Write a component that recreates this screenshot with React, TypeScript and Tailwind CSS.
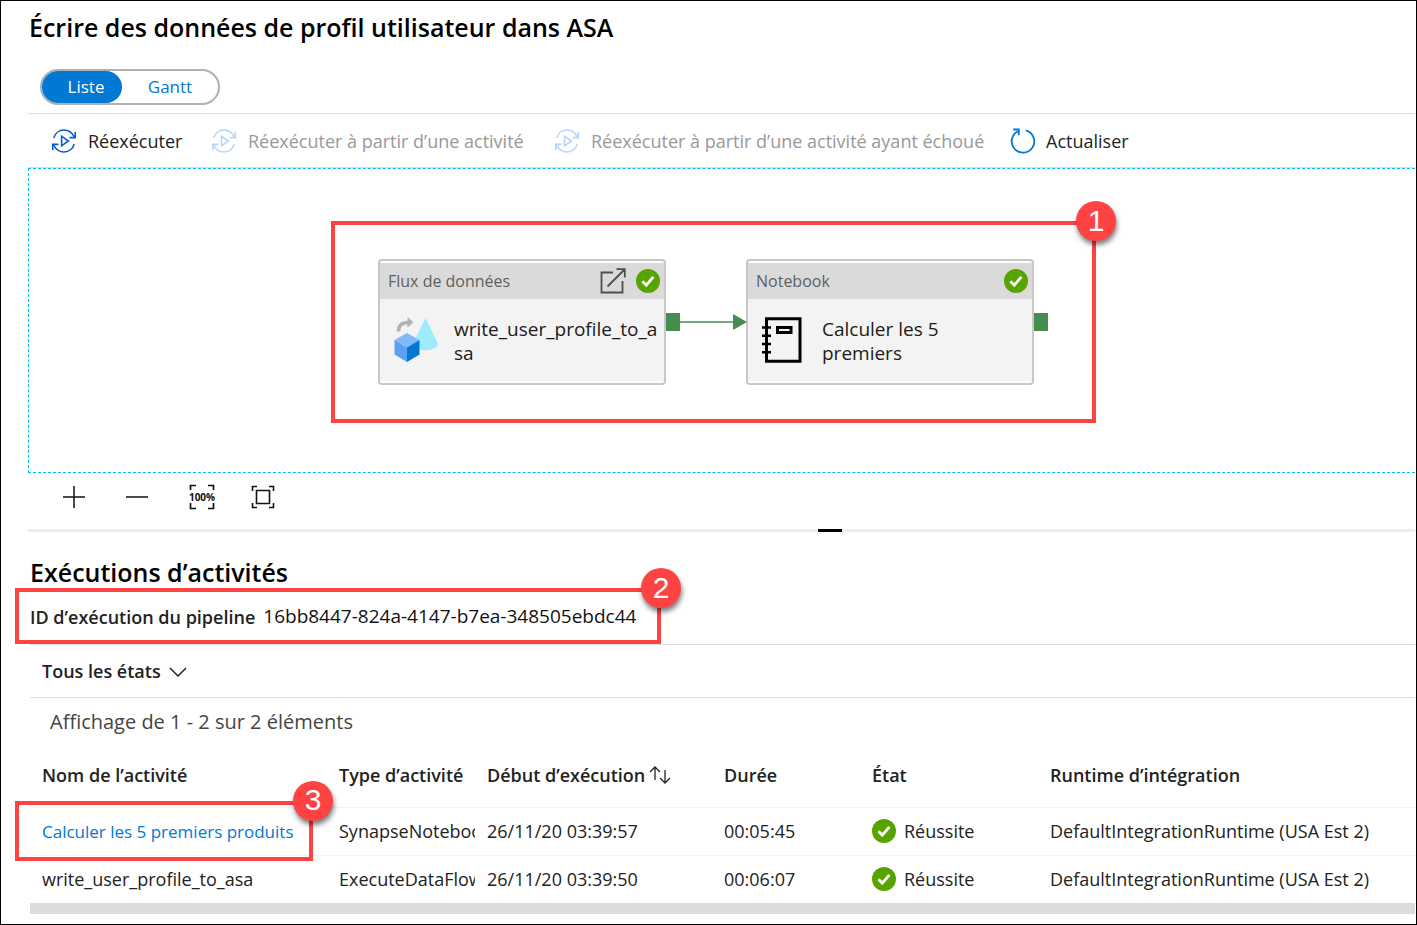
import React, { useState } from 'react';

interface ActivityRun {
    name: string;
    type: string;
    start: string;
    duration: string;
    status: string;
    runtime: string;
    isLink?: boolean;
}

const runs: ActivityRun[] = [
    { name: 'Calculer les 5 premiers produits', type: 'SynapseNotebook', start: '26/11/20 03:39:57', duration: '00:05:45', status: 'Réussite', runtime: 'DefaultIntegrationRuntime (USA Est 2)', isLink: true },
    { name: 'write_user_profile_to_asa', type: 'ExecuteDataFlow', start: '26/11/20 03:39:50', duration: '00:06:07', status: 'Réussite', runtime: 'DefaultIntegrationRuntime (USA Est 2)' },
];

function RerunIcon({ className }: { className: string }) {
    return (
        <svg viewBox="0 0 24 24" className={`w-6 h-6 shrink-0 ${className}`} fill="none" stroke="currentColor" strokeWidth="1.6">
            <path d="M1.800 9C3 4.400 7 1 12 1c4.400 0 8 2.400 10.400 7" />
            <path d="M23.200 3v5.600h-5.600" />
            <path d="M22.200 15c-1.200 4.600-5.200 8-10.200 8-4.400 0-8-2.400-10.400-7" />
            <path d="M.8 21v-5.600h5.600" />
            <path d="M9.600 7.200v9.600l6.800-4.800z" />
        </svg>
    );
}

function RefreshIcon() {
    return (
        <svg viewBox="0 0 26 26" className="w-[26px] h-[26px] shrink-0 text-[#0078d4]" fill="none" stroke="currentColor" strokeWidth="1.800">
            <path d="M15.800 2.400A11.300 11.300 0 1 1 8 3.200" />
            <path d="M3.200 1.500h5.600v5.800" />
        </svg>
    );
}

function SuccessIcon() {
    return (
        <svg viewBox="0 0 24 24" className="w-6 h-6 shrink-0" role="img" aria-label="Réussite">
            <circle cx="12" cy="12" r="12" fill="#57a300" />
            <path d="M6.400 12.200l3.900 4 7.100-8.400" fill="none" stroke="#fff" strokeWidth="2.800" />
        </svg>
    );
}

function OpenIcon() {
    return (
        <svg viewBox="0 0 26 26" className="w-[26px] h-[26px]" fill="none" stroke="#4d4d4d" strokeWidth="1.800">
            <path d="M13 4.500H1.500v20h21V13" />
            <path d="M7.500 18.500L24.500 1.500M16.500 1.200h8.300v8.300" />
        </svg>
    );
}

function DataFlowIcon() {
    return (
        <svg viewBox="0 0 44 46" className="w-11 h-[46px] shrink-0">
            <path d="M31.500 1L44 26.500c0 9-25 9-25 0z" fill="#9cebff" />
            <path d="M4.500 14.500C4.500 8.500 8 5.500 14 5.500" fill="none" stroke="#b3b3b3" strokeWidth="3.400" />
            <path d="M13.500 0l6 5.300-6 5.300z" fill="#b3b3b3" />
            <path d="M13 16l12.500 7L13 30.500.5 23z" fill="#83b9f9" />
            <path d="M.5 23L13 30.500v14.500L.5 37.500z" fill="#5ea0ef" />
            <path d="M25.500 23L13 30.500v14.500l12.500-7.500z" fill="#0078d4" />
        </svg>
    );
}

function NotebookIcon() {
    return (
        <svg viewBox="0 0 40 46" className="w-10 h-[46px] shrink-0" fill="none" stroke="#000" strokeWidth="3">
            <path d="M4.500 1.700h33.500v42.600H4.500z" />
            <path d="M15.500 10.500h13.500v5h-13.500z" />
            <path d="M0 10.500h9M0 18.700h9M0 27h9M0 35.300h9" strokeWidth="2.600" />
        </svg>
    );
}

// Numbered red frame drawn over the part of the page it surrounds
function Callout({ step, className }: { step: number; className: string }) {
    return (
        <div className={`absolute z-10 border-4 border-[#ff4343] pointer-events-none ${className}`}>
            <span className="absolute -top-6 -right-6 flex items-center justify-center w-10 h-10 rounded-full bg-[#ff4343] text-white text-[30px] font-normal shadow-[1px_4px_5px_rgba(0,0,0,0.5)] font-['Liberation_Sans',sans-serif]">
                {step}
            </span>
        </div>
    );
}

interface ActivityNodeProps {
    kind: string;
    title: string;
    icon: React.ReactNode;
    canOpen?: boolean;
    className: string;
}

function ActivityNode({ kind, title, icon, canOpen, className }: ActivityNodeProps) {
    return (
        <div className={`absolute w-[288px] h-[126px] py-0.5 flex flex-col bg-white border-2 border-[#c8c8c8] rounded ${className}`}>
            <div className="flex items-center h-9 pl-2 pr-1 bg-[#dadada] text-base text-[#5f5f5f]">
                <span className="flex-1">{kind}</span>
                {canOpen && (
                    <button aria-label="Ouvrir" className="mr-2.5">
                        <OpenIcon />
                    </button>
                )}
                <SuccessIcon />
            </div>
            <div className="flex flex-1 gap-4 pl-3.5 bg-[#f3f3f3]">
                <span className="w-11 pt-[18px]">{icon}</span>
                <span className="flex-1 pt-[18px] text-[19px] leading-6 text-[#1b1b1b] wrap-anywhere whitespace-pre-line">{title}</span>
            </div>
        </div>
    );
}

export default function App() {
    const [view, setView] = useState<'list' | 'gantt'>('list');

    const tab = (active: boolean) =>
        active ? 'bg-[#0078d4] text-white w-20 pl-2' : 'text-[#0078d4] w-24';

    return (
        <div className="min-h-screen border border-black bg-white text-lg text-[#222] font-['Open_Sans','Noto_Sans',sans-serif]">
            <h1 className="pl-7 pt-2 text-[25px] leading-9 font-semibold text-black">Écrire des données de profil utilisateur dans ASA</h1>

            <div className="mt-6 ml-[39px] inline-flex h-9 rounded-full border-2 border-[#b0b0b0] text-[17px]">
                <button onClick={() => setView('list')} className={`rounded-full ${tab(view === 'list')}`}>Liste</button>
                <button onClick={() => setView('gantt')} className={`rounded-full ${tab(view === 'gantt')}`}>Gantt</button>
            </div>

            <div className="ml-[27px] mr-px">
                <div className="flex items-center h-[55px] mt-2 pl-6 border-y border-[#dedede] whitespace-nowrap">
                    <button className="flex items-center gap-3 w-[160px]">
                        <RerunIcon className="text-[#015cda]" />
                        Réexécuter
                    </button>
                    <button disabled className="flex items-center gap-3 w-[343px] text-[#999]">
                        <RerunIcon className="text-[#b9d3f7]" />
                        Réexécuter à partir d’une activité
                    </button>
                    <button disabled className="flex items-center gap-3 w-[455px] text-[#999]">
                        <RerunIcon className="text-[#b9d3f7]" />
                        Réexécuter à partir d’une activité ayant échoué
                    </button>
                    <button className="flex items-center gap-2.5">
                        <RefreshIcon />
                        Actualiser
                    </button>
                </div>

                <div className="relative h-[305px] overflow-hidden border border-r-0 border-dashed border-[#00bcf2]">
                    <ActivityNode
                        kind="Flux de données"
                        title="write_user_profile_to_asa"
                        icon={<DataFlowIcon />}
                        canOpen
                        className="left-[349px] top-[90px]"
                    />
                    <ActivityNode
                        kind="Notebook"
                        title={'Calculer les 5\npremiers'}
                        icon={<NotebookIcon />}
                        className="left-[717px] top-[90px]"
                    />
                    <svg viewBox="0 0 82 20" className="absolute left-[637px] top-[143px] w-[82px] h-5" fill="#458e50">
                        <path d="M0 1h14v18H0zM67 2l14 8-14 8z" />
                        <path d="M14 10h54" stroke="#458e50" strokeWidth="1.500" />
                    </svg>
                    <div className="absolute left-[1005px] top-[144px] w-3.5 h-[18px] bg-[#458e50]" />
                    <Callout step={1} className="left-[302px] top-[52px] w-[765px] h-[202px]" />
                </div>

                <div className="flex items-center h-14 pb-2 pl-[35px] gap-10">
                    <button aria-label="Zoom avant">
                        <svg viewBox="0 0 22 22" className="w-[22px] h-[22px]" stroke="#111" strokeWidth="1.500">
                            <path d="M11 0v22M0 11h22" />
                        </svg>
                    </button>
                    <button aria-label="Zoom arrière">
                        <svg viewBox="0 0 24 22" className="w-6 h-[22px]" stroke="#111" strokeWidth="1.500">
                            <path d="M1 11h22" />
                        </svg>
                    </button>
                    <button aria-label="Zoom à 100 %">
                        <svg viewBox="0 0 26 26" className="w-[26px] h-[26px]">
                            <path d="M1.500 6V1.500H7M19 1.500h5.500V6M24.500 19v5.500H19M7 24.500H1.500V19" fill="none" stroke="#111" strokeWidth="1.700" />
                            <text x="13" y="16.500" textAnchor="middle" fontSize="10" fontWeight="700" fill="#111">100%</text>
                        </svg>
                    </button>
                    <button aria-label="Ajuster à la fenêtre" className="-ml-1">
                        <svg viewBox="0 0 24 24" className="w-6 h-6" fill="none" stroke="#111" strokeWidth="1.600">
                            <path d="M1.500 6V1.500H6M18 1.500h4.500V6M22.500 18v4.500H18M6 22.500H1.500V18M5.500 5.500h13v13h-13z" />
                        </svg>
                    </button>
                </div>

                <div className="flex justify-center h-[3px] pl-[216px] bg-[#ededed]">
                    <span className="w-6 bg-black" />
                </div>
            </div>

            <section className="ml-[29px] mr-px">
                <h2 className="pt-[22px] text-[25px] leading-9 font-semibold text-black">Exécutions d’activités</h2>

                <div className="relative flex items-center gap-2 h-[55px] border-b border-[#dcdcdc]">
                    <span className="font-semibold">ID d’exécution du pipeline</span>
                    <span className="text-[19px] text-[#111]">16bb8447-824a-4147-b7ea-348505ebdc44</span>
                    <Callout step={2} className="-left-[15px] -top-0.5 w-[646px] h-14" />
                </div>

                <div className="flex items-center h-[53px] pl-3 border-b border-[#dcdcdc]">
                    <div className="relative">
                        <select aria-label="États" className="appearance-none w-[145px] bg-transparent font-semibold">
                            <option>Tous les états</option>
                        </select>
                        <svg viewBox="0 0 18 10" className="absolute right-0 top-2.5 w-[18px] h-2.5 pointer-events-none" fill="none" stroke="#222" strokeWidth="1.500">
                            <path d="M1 1l8 8 8-8" />
                        </svg>
                    </div>
                </div>

                <p className="pl-5 pt-2.5 text-xl leading-7 text-[#444]">Affichage de 1 - 2 sur 2 éléments</p>

                <table className="mt-2 w-full table-fixed text-left whitespace-nowrap">
                    <colgroup>
                        <col className="w-[297px]" />
                        <col className="w-[148px]" />
                        <col className="w-[237px]" />
                        <col className="w-[148px]" />
                        <col className="w-[178px]" />
                        <col />
                    </colgroup>
                    <thead>
                        <tr className="h-[63px] border-b border-[#f3f3f3]">
                            <th className="pl-3 font-semibold">Nom de l’activité</th>
                            <th className="pl-3 font-semibold">Type d’activité</th>
                            <th className="pl-3 font-semibold">
                                <button className="flex items-center gap-1">
                                    Début d’exécution
                                    <svg viewBox="0 0 22 18" className="w-[22px] h-[18px]" fill="none" stroke="#222" strokeWidth="1.300">
                                        <path d="M6 14V1M1 6l5-5 5 5M16 4v13M11 12l5 5 5-5" />
                                    </svg>
                                </button>
                            </th>
                            <th className="pl-3 font-semibold">Durée</th>
                            <th className="pl-3 font-semibold">État</th>
                            <th className="pl-3 font-semibold">Runtime d’intégration</th>
                        </tr>
                    </thead>
                    <tbody>
                        {runs.map((run) => (
                            <tr key={run.name} className="h-12 border-b border-[#f3f3f3] last:border-b-0">
                                <td className="relative pl-3">
                                    {run.isLink ? (
                                        <>
                                            <a href="#" className="text-[17px] text-[#0078d4]">{run.name}</a>
                                            <Callout step={3} className="-left-[15px] -top-[7px] w-[298px] h-[60px]" />
                                        </>
                                    ) : run.name}
                                </td>
                                <td className="pl-3">
                                    <div className="overflow-hidden">{run.type}</div>
                                </td>
                                <td className="pl-3">{run.start}</td>
                                <td className="pl-3">{run.duration}</td>
                                <td className="pl-3">
                                    <div className="flex items-center gap-2">
                                        <SuccessIcon />
                                        {run.status}
                                    </div>
                                </td>
                                <td className="pl-3">{run.runtime}</td>
                            </tr>
                        ))}
                    </tbody>
                </table>
                <div className="h-[11px] bg-[#dcdcdc]" />
            </section>
        </div>
    );
}
